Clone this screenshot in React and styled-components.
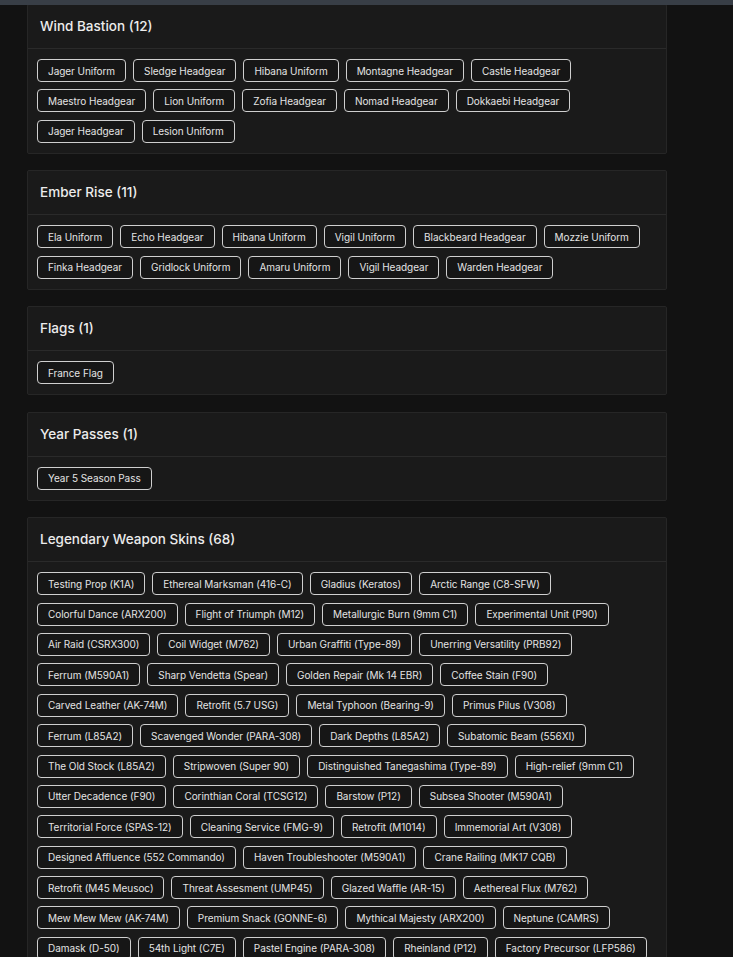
import React from 'react'
import styled, { createGlobalStyle } from 'styled-components'

const GlobalStyle = createGlobalStyle`
  html, body {
    margin: 0;
    padding: 0;
    background: #121212;
  }
  body {
    font-family: Inter, "Noto Sans", sans-serif;
    color: #e6e6e6;
  }
`

const TopStrip = styled.div`
  position: fixed;
  top: 0;
  left: 0;
  right: 0;
  height: 5px;
  background: #383e46;
  z-index: 2;
`

const Page = styled.div`
  padding: 4px 0 0 27px;
`

const Column = styled.div`
  width: 640px;
  display: flex;
  flex-direction: column;
  gap: 16.5px;
`

const Card = styled.section`
  background: #1a1a1a;
  border: 1px solid #262626;
  border-radius: 2px;
`

const CardHeader = styled.header`
  padding: 12px 12px 12px 12px;
  border-bottom: 1px solid #2a2a2a;
`

const Title = styled.h2`
  margin: 0;
  font-size: 13.5px;
  line-height: 19px;
  font-weight: 500;
  color: #ececec;
`

const ChipList = styled.div`
  display: flex;
  flex-wrap: wrap;
  column-gap: 7px;
  row-gap: 7.4px;
  padding: 10px 9px 10px 9px;
`

const Chip = styled.span`
  display: inline-flex;
  align-items: center;
  height: 23px;
  box-sizing: border-box;
  padding: 0 10px;
  border: 1px solid #cfcfcf;
  border-radius: 4px;
  background: #161616;
  font-size: 10px;
  letter-spacing: -0.05px;
  color: #e4e4e4;
  white-space: nowrap;
`

const sections = [
  {
    title: 'Wind Bastion',
    items: [
      'Jager Uniform', 'Sledge Headgear', 'Hibana Uniform', 'Montagne Headgear', 'Castle Headgear',
      'Maestro Headgear', 'Lion Uniform', 'Zofia Headgear', 'Nomad Headgear', 'Dokkaebi Headgear',
      'Jager Headgear', 'Lesion Uniform',
    ],
  },
  {
    title: 'Ember Rise',
    items: [
      'Ela Uniform', 'Echo Headgear', 'Hibana Uniform', 'Vigil Uniform', 'Blackbeard Headgear', 'Mozzie Uniform',
      'Finka Headgear', 'Gridlock Uniform', 'Amaru Uniform', 'Vigil Headgear', 'Warden Headgear',
    ],
  },
  { title: 'Flags', items: ['France Flag'] },
  { title: 'Year Passes', items: ['Year 5 Season Pass'] },
  {
    title: 'Legendary Weapon Skins',
    count: 68,
    items: [
      'Testing Prop (K1A)', 'Ethereal Marksman (416-C)', 'Gladius (Keratos)', 'Arctic Range (C8-SFW)',
      'Colorful Dance (ARX200)', 'Flight of Triumph (M12)', 'Metallurgic Burn (9mm C1)', 'Experimental Unit (P90)',
      'Air Raid (CSRX300)', 'Coil Widget (M762)', 'Urban Graffiti (Type-89)', 'Unerring Versatility (PRB92)',
      'Ferrum (M590A1)', 'Sharp Vendetta (Spear)', 'Golden Repair (Mk 14 EBR)', 'Coffee Stain (F90)',
      'Carved Leather (AK-74M)', 'Retrofit (5.7 USG)', 'Metal Typhoon (Bearing-9)', 'Primus Pilus (V308)',
      'Ferrum (L85A2)', 'Scavenged Wonder (PARA-308)', 'Dark Depths (L85A2)', 'Subatomic Beam (556XI)',
      'The Old Stock (L85A2)', 'Stripwoven (Super 90)', 'Distinguished Tanegashima (Type-89)', 'High-relief (9mm C1)',
      'Utter Decadence (F90)', 'Corinthian Coral (TCSG12)', 'Barstow (P12)', 'Subsea Shooter (M590A1)',
      'Territorial Force (SPAS-12)', 'Cleaning Service (FMG-9)', 'Retrofit (M1014)', 'Immemorial Art (V308)',
      'Designed Affluence (552 Commando)', 'Haven Troubleshooter (M590A1)', 'Crane Railing (MK17 CQB)',
      'Retrofit (M45 Meusoc)', 'Threat Assesment (UMP45)', 'Glazed Waffle (AR-15)', 'Aethereal Flux (M762)',
      'Mew Mew Mew (AK-74M)', 'Premium Snack (GONNE-6)', 'Mythical Majesty (ARX200)', 'Neptune (CAMRS)',
      'Damask (D-50)', '54th Light (C7E)', 'Pastel Engine (PARA-308)', 'Rheinland (P12)', 'Factory Precursor (LFP586)',
    ],
  },
]

const App = () => (
  <>
    <GlobalStyle />
    <TopStrip />
    <Page>
      <Column>
        {sections.map((s) => (
          <Card key={s.title}>
            <CardHeader>
              <Title>{s.title} ({s.count || s.items.length})</Title>
            </CardHeader>
            <ChipList>
              {s.items.map((item, i) => (
                <Chip key={i}>{item}</Chip>
              ))}
            </ChipList>
          </Card>
        ))}
      </Column>
    </Page>
  </>
)

export default App
